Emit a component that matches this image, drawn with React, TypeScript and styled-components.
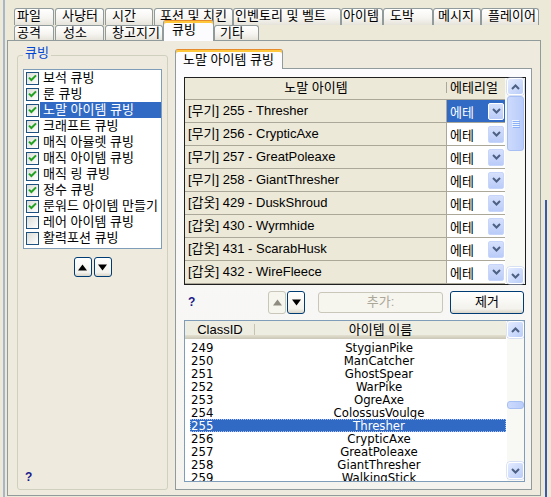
import React from "react";
import styled, { createGlobalStyle } from "styled-components";

const FONT = `"Liberation Sans", "Noto Sans CJK KR", sans-serif`;
const NARROW = `"Liberation Sans Narrow", "DejaVu Sans Condensed", "Liberation Sans", "Noto Sans CJK KR", sans-serif`;

const GlobalStyle = createGlobalStyle`
  html, body { margin: 0; padding: 0; background: #ECE9D8; }
  body { font-family: ${FONT}; font-size: 13px; color: #000; }
  * { box-sizing: border-box; }
`;

const Root = styled.div`
  width: 551px;
  height: 497px;
  overflow: hidden;
  display: flex;
  background: #ECE9D8;
`;

const LeftEdge = styled.div`
  flex: none;
  width: 2px;
  margin-left: 3px;
  background: #A9B6C8;
`;

const RightEdge = styled.div`
  flex: none;
  width: 2px;
  margin-left: 4px;
  margin-top: 200px;
  background: #3A5AA6;
`;

const TabControl = styled.div`
  flex: none;
  width: 534px;
  height: 496px;
  margin-left: 2px;
  padding-top: 8px;
  display: flex;
  flex-direction: column;
`;

const TabRow = styled.div<{ $h: number; $front?: boolean }>`
  display: flex;
  align-items: flex-end;
  height: ${(p) => p.$h}px;
  flex: none;
  position: relative;
  z-index: ${(p) => (p.$front ? 2 : 1)};
`;

const Tab = styled.div<{ $w: number; $ml: number; $pl: number; $h: number; $lh: number }>`
  flex: none;
  width: ${(p) => p.$w}px;
  height: ${(p) => p.$h}px;
  margin-left: ${(p) => p.$ml}px;
  padding-left: ${(p) => p.$pl}px;
  border: 1px solid #919B9C;
  border-bottom: none;
  border-radius: 3px 3px 0 0;
  background: linear-gradient(#FFFFFF, #F6F5F1 55%, #E6E4DA);
  font-size: 13px;
  line-height: ${(p) => p.$lh}px;
  white-space: nowrap;
  overflow: hidden;
`;

const ActiveTab = styled(Tab)`
  background: #FCFCFE;
  border-top: 1px solid #E68B2C;
  box-shadow: inset 0 2px 0 #FFC73C;
  padding-top: 2px;
  margin-bottom: -1px;
`;

const Panel = styled.div`
  flex: 1;
  border: 1px solid #919B9C;
  background: #EEEBDE;
  display: flex;
  align-items: stretch;
  padding-left: 9px;
`;

const GroupBox = styled.div`
  position: relative;
  flex: none;
  width: 151px;
  margin: 14px 0 5px 0;
  border: 1px solid #D0D0BF;
  border-radius: 3px;
  padding: 13px 5px 5px 5px;
  display: flex;
  flex-direction: column;
`;

const GroupLabel = styled.span`
  position: absolute;
  top: -10px;
  left: 5px;
  padding: 0 2px;
  background: #EEEBDE;
  color: #0046D5;
  font-size: 13px;
  line-height: 14px;
`;

const CheckList = styled.div`
  width: 139px;
  height: 180px;
  border: 1px solid #7F9DB9;
  background: #FFFFFF;
  display: flex;
  flex-direction: column;
`;

const CheckRow = styled.div`
  display: flex;
  align-items: center;
  height: 16px;
  padding-left: 2px;
`;

const CheckBox = styled.span`
  flex: none;
  width: 13px;
  height: 13px;
  border: 1px solid #1C5180;
  background: linear-gradient(135deg, #DCDCD7, #FFFFFF);
  display: flex;
  align-items: center;
  justify-content: center;
`;

const CheckLabel = styled.span<{ $sel?: boolean }>`
  flex: 1;
  margin-left: 1px;
  padding-left: 3px;
  height: 16px;
  line-height: 16px;
  font-size: 13px;
  white-space: nowrap;
  background: ${(p) => (p.$sel ? "#316AC5" : "transparent")};
  color: ${(p) => (p.$sel ? "#FFFFFF" : "#000000")};
`;

const Pair = styled.div<{ $gap: number }>`
  display: flex;
  gap: ${(p) => p.$gap}px;
`;

const CenterPair = styled(Pair)`
  align-self: center;
  margin-top: 8px;
`;

const XPButton = styled.div<{ $w: number; $h: number; $off?: boolean; $ml?: number }>`
  flex: none;
  width: ${(p) => p.$w}px;
  height: ${(p) => p.$h}px;
  margin-left: ${(p) => p.$ml ?? 0}px;
  border: 1px solid ${(p) => (p.$off ? "#C9C7BA" : "#003C74")};
  border-radius: 3px;
  background: ${(p) =>
    p.$off ? "#F6F5EE" : "linear-gradient(#FFFFFF, #F3F2EC 80%, #D8D4C8)"};
  color: ${(p) => (p.$off ? "#ACA899" : "#000000")};
  display: flex;
  align-items: center;
  justify-content: center;
  font-size: 13px;
  line-height: 14px;
`;

const Help = styled.span<{ $ml: number }>`
  flex: none;
  width: 8px;
  margin-left: ${(p) => p.$ml}px;
  font-family: "Liberation Sans", sans-serif;
  font-weight: bold;
  font-size: 12px;
  line-height: 14px;
  color: #1A1A8C;
`;

const GroupHelp = styled(Help)`
  margin-top: auto;
  margin-bottom: 0px;
`;

const SubTabs = styled.div`
  flex: none;
  width: 357px;
  margin: 8px 0 5px 7px;
  display: flex;
  flex-direction: column;
`;

const SubTabHead = styled.div`
  flex: none;
  height: 19px;
  display: flex;
  align-items: flex-end;
  position: relative;
  z-index: 2;
`;

const SubTab = styled.div`
  width: 108px;
  height: 20px;
  margin-bottom: -1px;
  border: 1px solid #919B9C;
  border-top: 1px solid #E68B2C;
  border-bottom: none;
  box-shadow: inset 0 2px 0 #FFC73C;
  border-radius: 3px 3px 0 0;
  background: #FCFCFE;
  padding: 2px 0 0 7px;
  font-size: 13px;
  line-height: 15px;
  white-space: nowrap;
`;

const SubPanel = styled.div`
  flex: 1;
  border: 1px solid #919B9C;
  background: linear-gradient(#FCFCFE, #F4F3EE);
  padding: 8px 0 0 8px;
  display: flex;
  flex-direction: column;
`;

const Grid = styled.div`
  flex: none;
  width: 342px;
  height: 208px;
  border: 1px solid #202020;
  display: flex;
  background: #FFFFFF;
`;

const GridMain = styled.div`
  width: 320px;
  display: flex;
  flex-direction: column;
`;

const GridHeader = styled.div`
  display: grid;
  grid-template-columns: 262px 58px;
  height: 22px;
  flex: none;
  background: #ECE9D8;
  border-bottom: 1px solid #ACA899;
  font-size: 13px;
  line-height: 20px;
`;

const HeadCell = styled.div<{ $align: string; $divider?: boolean }>`
  text-align: ${(p) => p.$align};
  padding-left: ${(p) => (p.$align === "left" ? 3 : 0)}px;
  white-space: nowrap;
  background: ${(p) =>
    p.$divider
      ? "linear-gradient(#ACA899, #ACA899) right 4px / 1px 11px no-repeat"
      : "none"};
`;

const GridRow = styled.div`
  display: grid;
  grid-template-columns: 262px 58px;
  height: 23px;
  flex: none;
  border-bottom: 1px solid #ACA899;
`;

const NameCell = styled.div`
  background: #ECE9D8;
  border-right: 1px solid #ACA899;
  padding-left: 3px;
  font-size: 13px;
  line-height: 22px;
  white-space: nowrap;
`;

const EtherCell = styled.div<{ $sel?: boolean }>`
  display: flex;
  align-items: center;
  justify-content: space-between;
  padding: 0 1px 0 3px;
  font-size: 13px;
  background: ${(p) => (p.$sel ? "#316AC5" : "#FFFFFF")};
  color: ${(p) => (p.$sel ? "#FFFFFF" : "#000000")};
`;

const DropBtn = styled.span<{ $sel?: boolean }>`
  width: 16px;
  height: 17px;
  display: flex;
  align-items: center;
  justify-content: center;
  border: 1px solid ${(p) => (p.$sel ? "#FFFFFF" : "#C7D5FB")};
  border-radius: 2px;
  background: linear-gradient(#D6E0FC, #B9CBF8);
`;

const VScroll = styled.div<{ $w: number; $pl: number; $pb: number }>`
  flex: none;
  width: ${(p) => p.$w}px;
  padding: 0 0 ${(p) => p.$pb}px ${(p) => p.$pl}px;
  background: #F8F8F4;
  display: flex;
  flex-direction: column;
`;

const ScrollBtn = styled.div`
  flex: none;
  width: 17px;
  height: 17px;
  border: 1px solid #FFFFFF;
  border-radius: 3px;
  background: linear-gradient(135deg, #E3EBFE, #BACDF9);
  box-shadow: 0 0 0 0.5px #B7C9F3;
  display: flex;
  align-items: center;
  justify-content: center;
`;

const Thumb = styled.div<{ $h: number; $top: number }>`
  flex: none;
  width: 17px;
  height: ${(p) => p.$h}px;
  margin-top: ${(p) => p.$top}px;
  border: 1px solid #A8BFF3;
  border-radius: 3px;
  background: linear-gradient(90deg, #CCDAFC, #B9CCF9);
  display: flex;
  align-items: center;
  justify-content: center;
`;

const Spacer = styled.div`
  flex: 1;
`;

const ActionRow = styled.div`
  flex: none;
  display: flex;
  align-items: center;
  height: 24px;
  margin-top: 5px;
`;

const ListView = styled.div`
  flex: none;
  width: 341px;
  height: 162px;
  margin-top: 6px;
  border: 1px solid #7F9DB9;
  background: #FFFFFF;
  display: flex;
  overflow: hidden;
`;

const ListMain = styled.div`
  flex: none;
  width: 321px;
  margin-right: 1px;
  display: flex;
  flex-direction: column;
  overflow: hidden;
`;

const ListHeader = styled.div`
  flex: none;
  display: grid;
  grid-template-columns: 70px 251px;
  height: 18px;
  background: linear-gradient(#EEEDE2 75%, #E2DECD 80%, #D6D2C2 90%, #CBC7B8);
  font-size: 13px;
  line-height: 17px;
`;

const ListHeadCell = styled.div<{ $divider?: boolean }>`
  text-align: center;
  white-space: nowrap;
  background: ${(p) =>
    p.$divider
      ? "linear-gradient(#C7C5B2, #C7C5B2) right 3px / 1px 11px no-repeat"
      : "none"};
`;

const ListBody = styled.div`
  padding: 2px 0 0 5px;
  display: flex;
  flex-direction: column;
`;

const ListRow = styled.div<{ $sel?: boolean }>`
  flex: none;
  display: grid;
  grid-template-columns: 65px 248px;
  height: 13px;
  font-family: ${NARROW};
  font-size: 13px;
  line-height: 13px;
  white-space: nowrap;
  background: ${(p) => (p.$sel ? "#316AC5" : "transparent")};
  color: ${(p) => (p.$sel ? "#FFFFFF" : "#000000")};
  outline: ${(p) => (p.$sel ? "1px dotted #A9C1EC" : "none")};
  outline-offset: -1px;
`;

const IdCell = styled.span`
  padding-left: 1px;
`;

const ItemCell = styled.span`
  text-align: center;
`;

/* ---------- icons ---------- */

const Tick = () => (
  <svg width="9" height="8" viewBox="0 0 9 8">
    <path d="M1 3.6 L3.4 6 L8 1.4" stroke="#21A121" strokeWidth="2" fill="none" />
  </svg>
);

const Tri = ({ up, color }: { up: boolean; color: string }) => (
  <svg width="9" height="7" viewBox="0 0 9 7">
    <path d={up ? "M0 6.5 L4.5 0.5 L9 6.5Z" : "M0 0.5 L4.5 6.5 L9 0.5Z"} fill={color} />
  </svg>
);

const Chevron = ({ up }: { up?: boolean }) => (
  <svg width="9" height="6" viewBox="0 0 9 6">
    <path
      d={up ? "M1 5 L4.5 1.5 L8 5" : "M1 1 L4.5 4.5 L8 1"}
      stroke="#4D6185"
      strokeWidth="2"
      fill="none"
    />
  </svg>
);

const Grip = () => (
  <svg width="8" height="8" viewBox="0 0 8 8">
    {[0, 2, 4, 6].map((y) => (
      <g key={y}>
        <rect x="0" y={y} width="7" height="1" fill="#EEF4FE" />
        <rect x="1" y={y + 1} width="7" height="1" fill="#8CB0F8" />
      </g>
    ))}
  </svg>
);

/* ---------- data ---------- */

type TabDef = { label: string; x1: number; x2: number; tx: number; active?: boolean };

const ROW1: TabDef[] = [
  { label: "파일", x1: 14, x2: 53, tx: 17 },
  { label: "사냥터", x1: 55, x2: 103, tx: 62 },
  { label: "시간", x1: 105, x2: 152, tx: 112 },
  { label: "포션 및 치킨", x1: 154, x2: 232, tx: 160 },
  { label: "인벤토리 및 벨트", x1: 233, x2: 340, tx: 235 },
  { label: "아이템", x1: 341, x2: 382, tx: 343 },
  { label: "도박", x1: 383, x2: 432, tx: 390 },
  { label: "메시지", x1: 433, x2: 480, tx: 438 },
  { label: "플레이어", x1: 481, x2: 538, tx: 488 },
];

const ROW2: TabDef[] = [
  { label: "공격", x1: 14, x2: 53, tx: 17 },
  { label: "성소", x1: 55, x2: 103, tx: 63 },
  { label: "창고지기", x1: 105, x2: 162, tx: 112 },
  { label: "큐빙", x1: 163, x2: 213, tx: 172, active: true },
  { label: "기타", x1: 214, x2: 258, tx: 220 },
];

const CHECKS: { label: string; on: boolean; sel?: boolean }[] = [
  { label: "보석 큐빙", on: true },
  { label: "룬 큐빙", on: true },
  { label: "노말 아이템 큐빙", on: true, sel: true },
  { label: "크래프트 큐빙", on: true },
  { label: "매직 아뮬렛 큐빙", on: true },
  { label: "매직 아이템 큐빙", on: true },
  { label: "매직 링 큐빙", on: true },
  { label: "정수 큐빙", on: true },
  { label: "룬워드 아이템 만들기", on: true },
  { label: "레어 아이템 큐빙", on: false },
  { label: "활력포션 큐빙", on: false },
];

const GRID_ROWS = [
  "[무기] 255 - Thresher",
  "[무기] 256 - CrypticAxe",
  "[무기] 257 - GreatPoleaxe",
  "[무기] 258 - GiantThresher",
  "[갑옷] 429 - DuskShroud",
  "[갑옷] 430 - Wyrmhide",
  "[갑옷] 431 - ScarabHusk",
  "[갑옷] 432 - WireFleece",
];

const LIST_ROWS: [string, string][] = [
  ["249", "StygianPike"],
  ["250", "ManCatcher"],
  ["251", "GhostSpear"],
  ["252", "WarPike"],
  ["253", "OgreAxe"],
  ["254", "ColossusVoulge"],
  ["255", "Thresher"],
  ["256", "CrypticAxe"],
  ["257", "GreatPoleaxe"],
  ["258", "GiantThresher"],
  ["259", "WalkingStick"],
];

const renderTabs = (defs: TabDef[], h: number, lh: number) => {
  let prev = 6;
  return defs.map((t) => {
    const ml = t.x1 - prev - 1;
    prev = t.x2;
    const w = t.x2 - t.x1 + 1;
    const pl = t.tx - t.x1 - 1;
    return t.active ? (
      <ActiveTab key={t.label} $w={w} $ml={ml} $pl={pl} $h={21} $lh={13}>
        {t.label}
      </ActiveTab>
    ) : (
      <Tab key={t.label} $w={w} $ml={ml} $pl={pl} $h={h} $lh={lh}>
        {t.label}
      </Tab>
    );
  });
};

export default function App() {
  return (
    <>
      <GlobalStyle />
      <Root>
        <LeftEdge />
        <TabControl>
          <TabRow $h={17}>{renderTabs(ROW1, 17, 14)}</TabRow>
          <TabRow $h={15} $front>
            {renderTabs(ROW2, 15, 13)}
          </TabRow>
          <Panel>
            <GroupBox>
              <GroupLabel>큐빙</GroupLabel>
              <CheckList>
                {CHECKS.map((c) => (
                  <CheckRow key={c.label}>
                    <CheckBox>{c.on && <Tick />}</CheckBox>
                    <CheckLabel $sel={c.sel}>{c.label}</CheckLabel>
                  </CheckRow>
                ))}
              </CheckList>
              <CenterPair $gap={2}>
                <XPButton $w={18} $h={20}>
                  <Tri up color="#000" />
                </XPButton>
                <XPButton $w={18} $h={20}>
                  <Tri up={false} color="#000" />
                </XPButton>
              </CenterPair>
              <GroupHelp $ml={2}>?</GroupHelp>
            </GroupBox>

            <SubTabs>
              <SubTabHead>
                <SubTab>노말 아이템 큐빙</SubTab>
              </SubTabHead>
              <SubPanel>
                <Grid>
                  <GridMain>
                    <GridHeader>
                      <HeadCell $align="center" $divider>
                        노말 아이템
                      </HeadCell>
                      <HeadCell $align="left">에테리얼</HeadCell>
                    </GridHeader>
                    {GRID_ROWS.map((r, i) => (
                      <GridRow key={r}>
                        <NameCell>{r}</NameCell>
                        <EtherCell $sel={i === 0}>
                          <span>에테</span>
                          <DropBtn $sel={i === 0}>
                            <Chevron />
                          </DropBtn>
                        </EtherCell>
                      </GridRow>
                    ))}
                  </GridMain>
                  <VScroll $w={20} $pl={2} $pb={0}>
                    <ScrollBtn>
                      <Chevron up />
                    </ScrollBtn>
                    <Thumb $h={55} $top={1}>
                      <Grip />
                    </Thumb>
                    <Spacer />
                    <ScrollBtn>
                      <Chevron />
                    </ScrollBtn>
                  </VScroll>
                </Grid>

                <ActionRow>
                  <Help $ml={4}>?</Help>
                  <XPButton $w={18} $h={23} $ml={72} $off>
                    <Tri up color="#8E8C80" />
                  </XPButton>
                  <XPButton $w={18} $h={23} $ml={1}>
                    <Tri up={false} color="#000" />
                  </XPButton>
                  <XPButton $w={125} $h={21} $ml={13} $off>
                    추가:
                  </XPButton>
                  <XPButton $w={74} $h={23} $ml={7}>
                    제거
                  </XPButton>
                </ActionRow>

                <ListView>
                  <ListMain>
                    <ListHeader>
                      <ListHeadCell $divider>ClassID</ListHeadCell>
                      <ListHeadCell>아이템 이름</ListHeadCell>
                    </ListHeader>
                    <ListBody>
                      {LIST_ROWS.map(([id, name]) => (
                        <ListRow key={id} $sel={id === "255"}>
                          <IdCell>{id}</IdCell>
                          <ItemCell>{name}</ItemCell>
                        </ListRow>
                      ))}
                    </ListBody>
                  </ListMain>
                  <VScroll $w={17} $pl={0} $pb={2}>
                    <ScrollBtn>
                      <Chevron up />
                    </ScrollBtn>
                    <Thumb $h={8} $top={63} />
                    <Spacer />
                    <ScrollBtn>
                      <Chevron />
                    </ScrollBtn>
                  </VScroll>
                </ListView>
              </SubPanel>
            </SubTabs>
          </Panel>
        </TabControl>
        <RightEdge />
      </Root>
    </>
  );
}
